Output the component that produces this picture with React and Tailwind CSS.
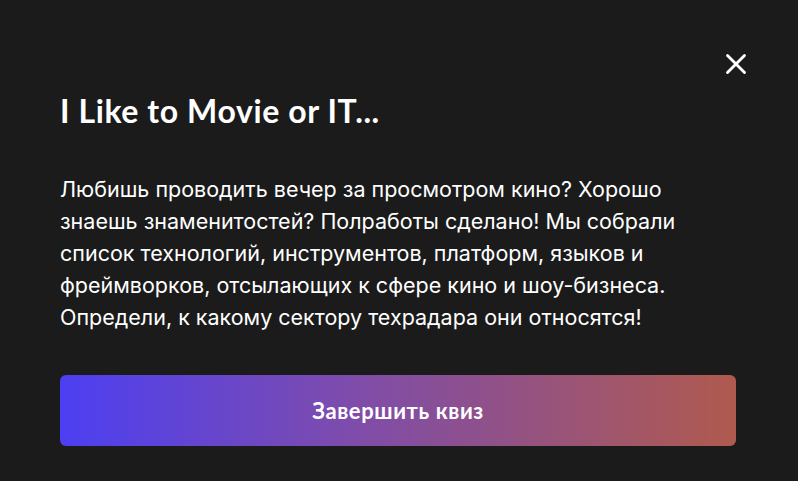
import { X } from "lucide-react";

export default function App() {
  return (
    <div className="w-[798px] h-[481px] bg-[#1b1b1b] text-white relative overflow-hidden">
      <button className="absolute right-[45px] top-[47px] text-white">
        <X size={34} strokeWidth={2} />
      </button>
      <div className="pl-[60px] pr-[62px] pt-[91px]">
        <h1 className="font-['Lato',sans-serif] font-bold text-[32px] leading-[40px] tracking-[0.6px]">
          I Like to Movie or IT...
        </h1>
        <p className="mt-[42px] font-['Inter',sans-serif] text-[21.5px] leading-[32px] text-white">
          Любишь проводить вечер за просмотром кино? Хорошо
          <br />
          знаешь знаменитостей? Полработы сделано! Мы собрали
          <br />
          список технологий, инструментов, платформ, языков и
          <br />
          фреймворков, отсылающих к сфере кино и шоу-бизнеса.
          <br />
          Определи, к какому сектору техрадара они относятся!
        </p>
        <button className="mt-[42px] w-full h-[71px] rounded-[6px] bg-[linear-gradient(90deg,#4c3ff2_0%,#7b4bb0_40%,#b05a4e_100%)] font-['Lato',sans-serif] font-bold text-[22px] tracking-[0.6px] text-white">
          Завершить квиз
        </button>
      </div>
    </div>
  );
}
